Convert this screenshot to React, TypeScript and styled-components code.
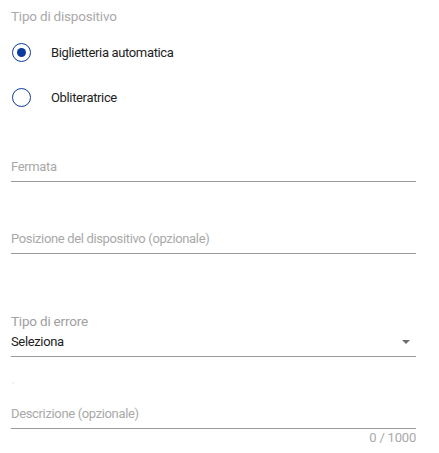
import React from "react";
import styled, { createGlobalStyle } from "styled-components";

const Global = createGlobalStyle`
  html, body { margin: 0; padding: 0; background: #fff; }
  body { font-family: Roboto, "Noto Sans", Arial, sans-serif; }
`;

const Form = styled.div`
  width: 405px;
  padding: 0 23px 0 11px;
  display: flex;
  flex-direction: column;
`;

const SectionLabel = styled.div`
  font-size: 13.5px;
  letter-spacing: -0.2px;
  line-height: 16px;
  color: #a9a9a9;
  margin-top: 8px;
`;

const RadioGroup = styled.div`
  display: flex;
  flex-direction: column;
  margin-top: 18px;
  gap: 25px;
`;

const RadioRow = styled.label`
  display: flex;
  align-items: center;
  height: 20px;
  cursor: pointer;
`;

const RadioCircle = styled.span<{ $checked?: boolean }>`
  box-sizing: border-box;
  width: 19px;
  height: 19px;
  border-radius: 50%;
  border: 1.6px solid #0b3b9e;
  display: flex;
  align-items: center;
  justify-content: center;
  margin-left: 0.5px;
  &::after {
    content: "";
    width: 9px;
    height: 9px;
    border-radius: 50%;
    background: #0b3b9e;
    display: ${(p) => (p.$checked ? "block" : "none")};
  }
`;

const RadioText = styled.span`
  font-size: 13px;
  letter-spacing: -0.35px;
  color: #1e1e1e;
  margin-left: 20.5px;
`;

const Field = styled.div<{ $mt: number }>`
  margin-top: ${(p) => p.$mt}px;
  border-bottom: 1px solid #9a9a9a;
  display: flex;
  flex-direction: column;
`;

const Placeholder = styled.div`
  font-size: 13px;
  letter-spacing: -0.35px;
  line-height: 16px;
  color: #a9a9a9;
  padding-bottom: 6px;
`;

const SelectLabel = styled.div`
  font-size: 13.5px;
  letter-spacing: -0.2px;
  line-height: 16px;
  color: #a0a0a0;
`;

const SelectRow = styled.div`
  display: flex;
  align-items: center;
  justify-content: space-between;
  padding: 5px 0 6px;
`;

const SelectValue = styled.span`
  font-size: 13px;
  letter-spacing: -0.35px;
  line-height: 16px;
  color: #1e1e1e;
`;

const Caret = styled.span`
  width: 0;
  height: 0;
  border-left: 4.5px solid transparent;
  border-right: 4.5px solid transparent;
  border-top: 4.5px solid #6e6e6e;
  margin-right: 6px;
`;

const Speck = styled.div`
  width: 2px;
  height: 2px;
  background: #f3f3f3;
  margin: 25px 0 0 1px;
`;

const Counter = styled.div`
  align-self: flex-end;
  font-size: 13px;
  letter-spacing: -0.2px;
  line-height: 16px;
  color: #a9a9a9;
  margin-top: 1px;
`;

export default function App() {
  return (
    <>
      <Global />
      <Form>
        <SectionLabel>Tipo di dispositivo</SectionLabel>
        <RadioGroup>
          <RadioRow>
            <RadioCircle $checked />
            <RadioText>Biglietteria automatica</RadioText>
          </RadioRow>
          <RadioRow>
            <RadioCircle />
            <RadioText>Obliteratrice</RadioText>
          </RadioRow>
        </RadioGroup>
        <Field $mt={52}>
          <Placeholder>Fermata</Placeholder>
        </Field>
        <Field $mt={49}>
          <Placeholder>Posizione del dispositivo (opzionale)</Placeholder>
        </Field>
        <Field $mt={59}>
          <SelectLabel>Tipo di errore</SelectLabel>
          <SelectRow>
            <SelectValue>Seleziona</SelectValue>
            <Caret />
          </SelectRow>
        </Field>
        <Speck />
        <Field $mt={22}>
          <Placeholder>Descrizione (opzionale)</Placeholder>
        </Field>
        <Counter>0 / 1000</Counter>
      </Form>
    </>
  );
}
